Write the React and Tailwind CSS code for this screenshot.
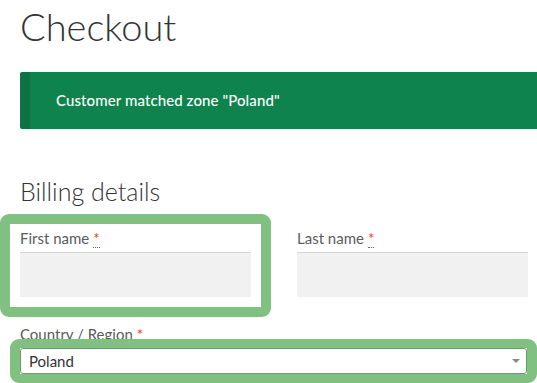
import React from 'react'

function Req() {
    return (
        <abbr title='required' className='text-[#e2401c] no-underline border-b border-dotted border-[#e2401c] ml-1 leading-none'>*</abbr>
    )
}

function Field({ label, highlight }) {
    return (
        <div className={`w-[271px] shrink-0 rounded-[9px] border-[10px] bg-white px-[10px] pt-[2px] pb-[10px] ${highlight ? 'border-[#80c080]' : 'border-transparent'}`}>
            <label className='block text-[15px] leading-6 text-[#5b5b5b] mb-[2px]'>
                {label}
                <Req />
            </label>
            <div className='h-[45px] w-full bg-[#f1f1f1] border-t border-[#d6d6d6]'></div>
        </div>
    )
}

export default function App() {
    return (
        <div className="w-[537px] h-[383px] overflow-hidden bg-white font-['Lato','Liberation_Sans',sans-serif]">
            <div className='pl-5'>
                <h1 className='pt-[3px] text-[38px] leading-[46px] font-light text-[#333]'>Checkout</h1>
                <div className='mt-[23px] flex items-center h-[57px] w-[560px] rounded-[2px] bg-[#0f834d] border-l-[10px] border-[#0d7343] pl-[26px]'>
                    <span className='text-white text-[15px] font-medium tracking-[0.1px]'>Customer matched zone "Poland"</span>
                </div>
                <h3 className='mt-[46px] text-[25px] leading-[32px] font-light text-[#333]'>Billing details</h3>
            </div>

            <div className='mt-[7px] flex gap-[6px]'>
                <Field label='First name' highlight />
                <Field label='Last name' />
            </div>

            <div className='pl-5 mt-[5px]'>
                <label className='block text-[15px] leading-6 text-[#5b5b5b]'>
                    Country / Region
                    <Req />
                </label>
            </div>
            <div className='relative -mt-[7px] ml-[10px] w-[527px] rounded-[9px] border-[10px] border-y-[9px] border-[#80c080]'>
                <div className='flex items-center justify-between h-[26px] bg-white border border-[#6a9c6b] rounded-[3px] pl-2 pr-[5px]'>
                    <span className='text-[15px] text-[#333]'>Poland</span>
                    <svg width='10' height='6' viewBox='0 0 10 6'>
                        <path d='M1 1h8L5 5z' fill='#888' />
                    </svg>
                </div>
            </div>
        </div>
    )
}
